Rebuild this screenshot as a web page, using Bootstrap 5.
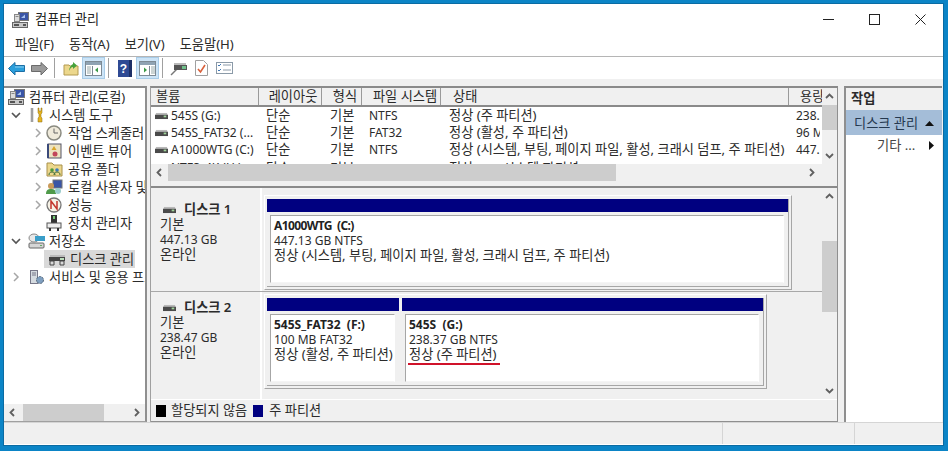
<!DOCTYPE html>
<html lang="ko"><head><meta charset="utf-8"><title>컴퓨터 관리</title>
<link href="https://cdn.jsdelivr.net/npm/bootstrap@5.3.0/dist/css/bootstrap.min.css" rel="stylesheet">
<style>
html,body{height:451px;overflow:hidden}
body{background:#0b84c6;font:13.2px/15px "Noto Sans","Noto Sans CJK KR",sans-serif;color:#2b2b2b;padding:4px 5px 6px 4px}
.lt{font-size:12px}
.wnd{width:939px;height:441px;background:#fff;box-shadow:0 0 0 1px #0a6ba3}
.ttl{height:31px;padding-left:8px;color:#222}
.ttl-txt{margin-left:2px}
.ctl{width:46px;height:31px}
.mnu{height:22px;padding-left:11px;gap:15px;border-bottom:1px solid #b5b5b5;padding-bottom:2px}
.tbar{height:22px;padding-left:1px}
.tb-ic{width:23px;height:22px}
.tb-gap{margin-left:1px}
.tb-on{background:#cce4f7;border:1px solid #a8cce8}
.tb-sep{width:1px;height:20px;background:#a0a0a0;margin:0 3px}
.work{height:343px;background:#f0f0f0;padding-top:7px}
.tree{width:143px;height:336px;background:#fff;border-top:2px solid #8a8a8a;border-right:2px solid #8f8f8f;border-bottom:1px solid #a0a0a0}
.tree-body{height:316px;overflow:hidden}
.tr{height:18px;white-space:nowrap;line-height:18px}
.tr-ind0{padding-left:4px}.tr-ind1{padding-left:4px}.tr-ind2{padding-left:25px}
.tw{width:16px;height:16px;flex:none}
.tr-ic{width:18px;height:16px;flex:none;margin-right:3px}
.tr-ic2{margin-right:5px}
.tr-ind3{margin-left:41px}
.tr-sel{background:#d9d9d9;width:91px;height:18px;margin-left:40px;padding-left:4px}
.tr-sel .tr-ic{margin-right:4px}
.sb-h{height:17px;background:#f0f0f0}
.sb-arr{width:17px;height:17px;flex:none}
.sb-trk{flex:1 1 auto;height:17px}
.sb-th{height:17px;background:#cdcdcd}
.sb-th1{width:81px;margin-left:2px}
.sb-th2{width:448px}
.sb-t3{height:25px;width:15px}
.sb-t4{height:71px;width:15px}
.spc36{height:36px}
.spc17{width:17px}
.midp{width:688px;height:336px;margin-left:3px;border-top:2px solid #8a8a8a;border-left:1px solid #a0a0a0;border-right:1px solid #8f8f8f;background:#f0f0f0}
.vol-wrap{height:76px}
.vol-main{width:671px}
.hdr{height:19px;background:#f0f0f0;border-bottom:2px solid #8a8a8a;overflow:hidden}
.hc{flex:none;height:17px;line-height:17px;padding-left:5px;border-right:1px solid #9a9a9a;white-space:nowrap;overflow:hidden}
.c1{width:108px}.c2{width:63px;text-align:center;padding:0 0 0 6px}.c3{width:40px;text-align:center;padding:0 0 0 7px}.c4{width:79px;text-align:center;padding:0 0 0 8px}.c5{width:348px;padding-left:12px}.c6{width:33px;border:0;padding-left:11px}
.rows{height:57px;overflow:hidden;background:#fff}
.rw{height:17px;line-height:17px;white-space:nowrap}
.rw-last{padding-top:2px}
.rc{flex:none;overflow:hidden;padding-left:5px}
.r1{width:108px;padding-left:4px}.r2{width:63px;padding-left:7px}.r3{width:40px;padding-left:8px}.r4{width:79px;padding-left:7px}.r5{width:348px;padding-left:8px}.r6{width:31px;padding-left:7px}
.dk-ic{width:13px;height:8px;flex:none;margin-right:3px}
.sb-v{width:15px;background:#f0f0f0;flex:none}
.sb-varr{height:17px;width:15px;flex:none}
.div-bar{height:7px;border-bottom:2px solid #8a8a8a;background:#f0f0f0}
.dk-area{height:211px}
.dk-main{width:671px}
.dk-row{height:104px;border-bottom:1px solid #a8a8a8}
.dk-row2{height:107px;border-bottom:0}
.dk-lbl{flex:none;width:111px;padding:12px 0 0 9px;border-right:2px solid #fff;line-height:15px}
.dk-lbl2{padding-top:6px}
.dk-ttl{font-weight:600;height:17px;padding-top:2px}
.dk-ttl svg{margin:0 8px 0 3px}
.frm{margin:7px 0 0 2px;height:95px;border:1px solid #a6a6a6;border-top-color:#fff;border-left-color:#fff;padding:3px 2px 2px 2px}
.frm-t{margin-top:2px}
.frm1{width:528px}.frm2{width:503px}
.frm-in{height:100%;border-right:1px solid #a6a6a6;border-bottom:1px solid #a6a6a6}
.pt-bar{height:13px;background:#000080}
.pt-col{flex:none}
.pt-w1{width:132px}.pt-w2{width:361px;margin-left:3px}
.pt-box{margin:3px 4px 0 3px;height:68px;background:#fff;border:1px solid #a6a6a6;border-right-color:#fff;border-bottom-color:#f4f4f4;padding:2px 3px;white-space:nowrap;overflow:hidden;line-height:15px}
.pt-nm{font-weight:700;color:#222}
.pt-tight{letter-spacing:-.6px}
.red-u{width:92px;height:2px;background:#d0122a;margin:1px 0 0 -1px}
.lgd{height:21px;border-top:1px solid #fff;border-bottom:1px solid #8f8f8f;background:#f0f0f0;padding-left:5px;box-sizing:content-box}
.swt{width:10px;height:12px;margin-right:5px;flex:none}
.sw-k{background:#000}.sw-b{background:#000080;margin:0 6px 0 6px}
.act{width:98px;height:336px;margin-left:6px;background:#fff;border-top:2px solid #8a8a8a;border-left:2px solid #8f8f8f}
.act-h{height:22px;background:#f0f0f0;padding-left:5px;font-weight:600;line-height:20px}
.act-s{height:25px;background:#a4bdd8;padding:1px 0 0 8px;color:#24384f}
.act-i{height:21px;padding-left:31px;color:#444}
.stat{height:22px;background:#f0f0f0;border-top:1px solid #d5d5d5}
.st1{width:719px;border-right:1px solid #d5d5d5}.st2{width:132px;border-right:1px solid #d5d5d5}
.g3{margin-right:3px}
</style></head><body>
<svg width="0" height="0" class="d-block position-absolute">
<defs>
<symbol id="hdd" viewBox="0 0 15 9"><rect x="1" y="1" width="13" height="2" fill="#b9b9b9"/><rect x="0" y="3" width="15" height="5" fill="#4a4a4a"/><rect x="10" y="4" width="3" height="2" fill="#9fd39a"/></symbol>
<symbol id="pc" viewBox="0 0 18 16"><rect x="6.500" y=".5" width="10" height="8" fill="#3a55a6" stroke="#777"/><path d="M9 6l4-3.500V6z" fill="#a9c4ee"/><rect x="2.500" y="2.500" width="5" height="7" fill="#dcdcdc" stroke="#888"/><rect x="3.500" y="4" width="3" height="1" fill="#888"/><rect x=".5" y="10.500" width="15" height="5" fill="#c8c8c8" stroke="#666"/><rect x="2" y="12" width="5" height="2" fill="#555"/><rect x="11" y="12" width="3" height="2" fill="#555"/></symbol>
<symbol id="chev-d" viewBox="0 0 10 10"><path d="M1 3l4 4 4-4" fill="none" stroke="#555" stroke-width="1.700"/></symbol>
<symbol id="chev-r" viewBox="0 0 10 10"><path d="M3 1l4 4-4 4" fill="none" stroke="#a6a6a6" stroke-width="1.500"/></symbol>
<symbol id="a-u" viewBox="0 0 15 17"><path d="M4 10l3.500-3.500L11 10" fill="none" stroke="#606060" stroke-width="1.800"/></symbol>
<symbol id="a-d" viewBox="0 0 15 17"><path d="M4 7l3.500 3.500L11 7" fill="none" stroke="#606060" stroke-width="1.800"/></symbol>
<symbol id="a-l" viewBox="0 0 17 17"><path d="M10 5l-3.500 3.500L10 12" fill="none" stroke="#606060" stroke-width="1.800"/></symbol>
<symbol id="a-r" viewBox="0 0 17 17"><path d="M7 5l3.500 3.500L7 12" fill="none" stroke="#606060" stroke-width="1.800"/></symbol>
</defs></svg>
<div class="wnd d-flex flex-column">
 <div class="ttl d-flex align-items-center">
  <svg class="tr-ic"><use href="#pc"/></svg>
  <span class="ttl-txt flex-grow-1">컴퓨터 관리</span>
  <div class="ctl d-flex align-items-center justify-content-center"><svg width="11" height="11"><path d="M0 5.500h11" stroke="#222"/></svg></div>
  <div class="ctl d-flex align-items-center justify-content-center"><svg width="11" height="11"><rect x=".5" y=".5" width="10" height="10" fill="none" stroke="#222"/></svg></div>
  <div class="ctl d-flex align-items-center justify-content-center"><svg width="11" height="11"><path d="M.5.500l10 10M10.500.500l-10 10" stroke="#222"/></svg></div>
 </div>
 <div class="mnu d-flex align-items-center"><span>파일(F)</span><span>동작(A)</span><span>보기(V)</span><span>도움말(H)</span></div>
 <div class="tbar d-flex align-items-center">
  <div class="tb-ic d-flex align-items-center justify-content-center"><svg width="17" height="13"><path d="M.5 6.500L7 .5v3h9.500v6H7v3.500z" fill="#2b9fdc" stroke="#1c6ea5"/><path d="M7 5h9" stroke="#8fd0f0"/></svg></div>
  <div class="tb-ic d-flex align-items-center justify-content-center"><svg width="17" height="13"><path d="M16.500 6.500L10 .5v3H.5v6H10v3.500z" fill="#9a9a9a" stroke="#6b6b6b"/></svg></div>
  <div class="tb-sep"></div>
  <div class="tb-ic tb-gap d-flex align-items-center justify-content-center"><svg width="16" height="16"><path d="M1 5h5l1 1h8v9H1z" fill="#ecd78c" stroke="#b39a50"/><path d="M6 11c0-3 2-6 4-7V2l4 3.500L10 9V7c-2 0-3 2-4 4z" fill="#46a23c"/></svg></div>
  <div class="tb-ic tb-on d-flex align-items-center justify-content-center"><svg width="17" height="15"><rect x=".5" y=".5" width="16" height="14" fill="#fff" stroke="#7d8a94"/><rect x="1" y="1" width="15" height="3" fill="#8fa3b3"/><path d="M7.500 5v9" stroke="#7d8a94"/><path d="M2 6h4M2 8h4M2 10h4M2 12h4" stroke="#9aa"/><path d="M13 6.500v5l-3-2.500z" fill="#3b9a46"/></svg></div>
  <div class="tb-sep"></div>
  <div class="tb-ic tb-gap d-flex align-items-center justify-content-center"><svg width="14" height="17"><rect width="14" height="17" fill="#2f4a94"/><rect x="11" width="3" height="17" fill="#1d2f66"/><text x="5.500" y="13" font-size="12" font-weight="700" fill="#fff" text-anchor="middle" font-family="Liberation Sans">?</text></svg></div>
  <div class="tb-ic tb-on d-flex align-items-center justify-content-center"><svg width="17" height="15"><rect x=".5" y=".5" width="16" height="14" fill="#fff" stroke="#7d8a94"/><rect x="1" y="1" width="15" height="3" fill="#8fa3b3"/><path d="M10.500 5v9" stroke="#7d8a94"/><path d="M12 6h4M12 8h4M12 10h4M12 12h4" stroke="#9aa"/><path d="M5 6.500v5l3-2.500z" fill="#3b9a46"/></svg></div>
  <div class="tb-sep"></div>
  <div class="tb-ic tb-gap d-flex align-items-center justify-content-center"><svg width="18" height="15"><path d="M1 14l6-6" stroke="#777" stroke-width="1.500"/><rect x="4" y="4" width="13" height="5" fill="#555"/><rect x="4" y="2" width="12" height="2" fill="#bbb"/><rect x="12" y="5" width="4" height="3" fill="#6fc08a"/></svg></div>
  <div class="tb-ic d-flex align-items-center justify-content-center"><svg width="13" height="16"><path d="M.5.500h8l4 4v11H.5z" fill="#fff" stroke="#a0a0a0"/><path d="M3 9l2.500 3L10 5" fill="none" stroke="#d9603a" stroke-width="1.600"/></svg></div>
  <div class="tb-ic d-flex align-items-center justify-content-center"><svg width="17" height="12"><rect x=".5" y=".5" width="16" height="11" fill="#fff" stroke="#8b9aa8"/><path d="M2 3l1 1 2-2M2 8l1 1 2-2" fill="none" stroke="#3d76b5"/><path d="M7 3h8M7 8h8" stroke="#8b9aa8"/></svg></div>
 </div>
 <div class="work d-flex">
  <div class="tree d-flex flex-column">
   <div class="tree-body flex-grow-1">
    <div class="tr d-flex align-items-center tr-ind0"><svg class="tr-ic g3"><use href="#pc"/></svg><span>컴퓨터 관리(로컬)</span></div>
    <div class="tr d-flex align-items-center tr-ind1"><svg class="tw me-1"><use href="#chev-d" width="10" height="10" x="3" y="3"/></svg><svg class="tr-ic" viewBox="0 0 18 16"><path d="M4 1v14" stroke="#c9c9c9" stroke-width="3"/><path d="M4 1v14" stroke="#777"/><path d="M10 1v5l1 1v3l-1 1v4h4v-4l-1-1V7l1-1V1h-1v3h-2V1z" fill="#e5b420" stroke="#8a6a10" stroke-width=".5"/></svg><span>시스템 도구</span></div>
    <div class="tr d-flex align-items-center tr-ind2"><svg class="tw"><use href="#chev-r" width="10" height="10" x="4" y="3"/></svg><svg class="tr-ic tr-ic2" viewBox="0 0 18 16"><circle cx="9" cy="8" r="7" fill="#efeadb" stroke="#8a8a80" stroke-width="1.500"/><path d="M9 3.500V8h4" fill="none" stroke="#666"/></svg><span>작업 스케줄러</span></div>
    <div class="tr d-flex align-items-center tr-ind2"><svg class="tw"><use href="#chev-r" width="10" height="10" x="4" y="3"/></svg><svg class="tr-ic tr-ic2" viewBox="0 0 18 16"><rect x="3" y="1" width="13" height="14" fill="#ece2c0" stroke="#556"/><path d="M3 1v14" stroke="#3a4a7a" stroke-width="2"/><path d="M9 3l2.500 4h-5z" fill="#d9a52a"/><circle cx="10" cy="11" r="2.500" fill="#c2455a"/></svg><span>이벤트 뷰어</span></div>
    <div class="tr d-flex align-items-center tr-ind2"><svg class="tw"><use href="#chev-r" width="10" height="10" x="4" y="3"/></svg><svg class="tr-ic tr-ic2" viewBox="0 0 18 16"><path d="M2 2h5l2 2h8v11H2z" fill="#ecd78c" stroke="#a8904a"/><circle cx="7" cy="9" r="1.800" fill="#4c9a3a"/><circle cx="12" cy="9" r="1.800" fill="#3a7ab8"/><path d="M4 14c0-2 1-3 3-3s3 1 3 3M9 14c0-2 1-3 3-3s3 1 3 3" fill="none" stroke="#3a6a3a"/></svg><span>공유 폴더</span></div>
    <div class="tr d-flex align-items-center tr-ind2"><svg class="tw"><use href="#chev-r" width="10" height="10" x="4" y="3"/></svg><svg class="tr-ic tr-ic2" viewBox="0 0 18 16"><rect x="8" y="1" width="9" height="8" fill="#3a55a6" stroke="#777"/><circle cx="6" cy="7" r="3" fill="#c99a5a"/><path d="M1 15c0-4 2-5 5-5s5 1 5 5z" fill="#4f9a4a"/><circle cx="13" cy="12" r="3" fill="#9cc"/></svg><span>로컬 사용자 및 그룹</span></div>
    <div class="tr d-flex align-items-center tr-ind2"><svg class="tw"><use href="#chev-r" width="10" height="10" x="4" y="3"/></svg><svg class="tr-ic tr-ic2" viewBox="0 0 18 16"><circle cx="9" cy="8" r="7" fill="#f6f2e6" stroke="#777" stroke-width="1.300"/><path d="M6 12V4l6 8V4" fill="none" stroke="#c2352a" stroke-width="1.500"/></svg><span>성능</span></div>
    <div class="tr d-flex align-items-center"><svg class="tr-ic tr-ic2 tr-ind3" viewBox="0 0 18 16"><rect x="6" y="0" width="6" height="8" fill="#333"/><rect x="8" y="1" width="2" height="3" fill="#7c7"/><rect x="2" y="8" width="14" height="5" fill="#eee" stroke="#555"/><rect x="4" y="13" width="2" height="3" fill="#333"/><rect x="12" y="13" width="2" height="3" fill="#333"/></svg><span>장치 관리자</span></div>
    <div class="tr d-flex align-items-center tr-ind1"><svg class="tw me-1"><use href="#chev-d" width="10" height="10" x="3" y="3"/></svg><svg class="tr-ic" viewBox="0 0 18 16"><rect x="1" y="10" width="15" height="5" rx="1" fill="#d5d5d5" stroke="#666"/><rect x="12" y="12" width="2" height="1" fill="#6a6"/><ellipse cx="6" cy="5" rx="5" ry="4" fill="#e8e8e8" stroke="#888"/><rect x="7" y="3" width="10" height="5" fill="#3a9ec9"/></svg><span>저장소</span></div>
    <div class="tr d-flex align-items-center"><div class="tr-sel d-flex align-items-center"><svg class="tr-ic" viewBox="0 0 18 16"><rect x="2" y="4" width="15" height="2" fill="#bbb"/><rect x="1" y="6" width="16" height="4" fill="#444"/><rect x="12" y="7" width="4" height="2" fill="#bdb"/><path d="M2 10h4v4H2zM12 10h4v4h-4z" fill="none" stroke="#444"/></svg><span>디스크 관리</span></div></div>
    <div class="tr d-flex align-items-center tr-ind1"><svg class="tw me-1"><use href="#chev-r" width="10" height="10" x="3" y="3"/></svg><svg class="tr-ic" viewBox="0 0 18 16"><rect x="2.500" y="1.500" width="7" height="13" fill="#d5dbe0" stroke="#778"/><path d="M4 4h4M4 6h4" stroke="#778"/><circle cx="12" cy="11" r="3.500" fill="#7f9fc0" stroke="#567" stroke-dasharray="2 1"/></svg><span>서비스 및 응용 프로그램</span></div>
   </div>
   <div class="sb-h d-flex"><svg class="sb-arr"><use href="#a-l"/></svg><div class="sb-trk d-flex"><div class="sb-th sb-th1"></div></div><svg class="sb-arr"><use href="#a-r"/></svg></div>
  </div>
  <div class="midp d-flex flex-column">
   <div class="vol-wrap d-flex">
    <div class="vol-main">
     <div class="hdr d-flex">
      <div class="hc c1">볼륨</div><div class="hc c2">레이아웃</div><div class="hc c3">형식</div><div class="hc c4">파일 시스템</div><div class="hc c5">상태</div><div class="hc c6">용량</div>
     </div>
     <div class="rows">
      <div class="rw d-flex"><div class="rc r1 lt d-flex align-items-center"><svg class="dk-ic"><use href="#hdd"/></svg>545S (G:)</div><div class="rc r2">단순</div><div class="rc r3">기본</div><div class="rc r4 lt">NTFS</div><div class="rc r5">정상 (주 파티션)</div><div class="rc r6 lt">238.37 GB</div></div>
      <div class="rw d-flex"><div class="rc r1 lt d-flex align-items-center"><svg class="dk-ic"><use href="#hdd"/></svg>545S_FAT32 (...</div><div class="rc r2">단순</div><div class="rc r3">기본</div><div class="rc r4 lt">FAT32</div><div class="rc r5">정상 (활성, 주 파티션)</div><div class="rc r6 lt">96 MB</div></div>
      <div class="rw d-flex"><div class="rc r1 lt d-flex align-items-center"><svg class="dk-ic"><use href="#hdd"/></svg>A1000WTG (C:)</div><div class="rc r2">단순</div><div class="rc r3">기본</div><div class="rc r4 lt">NTFS</div><div class="rc r5">정상 (시스템, 부팅, 페이지 파일, 활성, 크래시 덤프, 주 파티션)</div><div class="rc r6 lt">447.13 GB</div></div>
      <div class="rw rw-last d-flex"><div class="rc r1 lt d-flex align-items-center"><svg class="dk-ic"><use href="#hdd"/></svg>NTFS_4K (H:)</div><div class="rc r2">단순</div><div class="rc r3">기본</div><div class="rc r4 lt">FAT</div><div class="rc r5">정상 (EFI 시스템 파티션)</div><div class="rc r6 lt">5.12 GB</div></div>
     </div>
    </div>
    <div class="sb-v d-flex flex-column"><svg class="sb-varr"><use href="#a-u"/></svg><div class="sb-th sb-t3"></div><div class="flex-grow-1"></div><svg class="sb-varr"><use href="#a-d"/></svg></div>
   </div>
   <div class="sb-h d-flex"><svg class="sb-arr"><use href="#a-l"/></svg><div class="sb-trk"><div class="sb-th sb-th2"></div></div><svg class="sb-arr"><use href="#a-r"/></svg><div class="spc17"></div></div>
   <div class="div-bar"></div>
   <div class="dk-area d-flex">
    <div class="dk-main">
     <div class="dk-row d-flex">
      <div class="dk-lbl"><div class="dk-ttl d-flex align-items-center"><svg class="dk-ic"><use href="#hdd"/></svg>디스크 1</div><div>기본</div><div class="lt">447.13 GB</div><div>온라인</div></div>
      <div class="frm frm1"><div class="frm-in"><div class="pt-bar"></div><div class="pt-box"><div class="pt-nm pt-tight lt">A1000WTG&nbsp; (C:)</div><div class="lt">447.13 GB NTFS</div><div>정상 (시스템, 부팅, 페이지 파일, 활성, 크래시 덤프, 주 파티션)</div></div></div></div>
     </div>
     <div class="dk-row dk-row2 d-flex">
      <div class="dk-lbl dk-lbl2"><div class="dk-ttl d-flex align-items-center"><svg class="dk-ic"><use href="#hdd"/></svg>디스크 2</div><div>기본</div><div class="lt">238.47 GB</div><div>온라인</div></div>
      <div class="frm frm-t frm2"><div class="frm-in d-flex">
       <div class="pt-col pt-w1"><div class="pt-bar"></div><div class="pt-box"><div class="pt-nm lt">545S_FAT32&nbsp; (F:)</div><div class="lt">100 MB FAT32</div><div>정상 (활성, 주 파티션)</div></div></div>
       <div class="pt-col pt-w2"><div class="pt-bar"></div><div class="pt-box"><div class="pt-nm lt">545S&nbsp; (G:)</div><div class="lt">238.37 GB NTFS</div><div>정상 (주 파티션)</div><div class="red-u"></div></div></div>
      </div></div>
     </div>
    </div>
    <div class="sb-v d-flex flex-column"><svg class="sb-varr"><use href="#a-u"/></svg><div class="spc36"></div><div class="sb-th sb-t4"></div><div class="flex-grow-1"></div><svg class="sb-varr"><use href="#a-d"/></svg></div>
   </div>
   <div class="lgd d-flex align-items-center"><span class="swt sw-k"></span><span>할당되지 않음</span><span class="swt sw-b"></span><span>주 파티션</span></div>
  </div>
  <div class="act">
   <div class="act-h">작업</div>
   <div class="act-s d-flex align-items-center justify-content-between"><span>디스크 관리</span><svg width="9" height="5" class="me-2"><path d="M0 5l4.500-5L9 5z" fill="#111"/></svg></div>
   <div class="act-i d-flex align-items-center justify-content-between"><span>기타 ...</span><svg width="5" height="9" class="me-2"><path d="M0 0l5 4.500L0 9z" fill="#111"/></svg></div>
  </div>
 </div>
 <div class="stat d-flex"><div class="st1"></div><div class="st2"></div></div>
</div>
<script src="https://cdn.jsdelivr.net/npm/bootstrap@5.3.0/dist/js/bootstrap.bundle.min.js"></script>
</body></html>
